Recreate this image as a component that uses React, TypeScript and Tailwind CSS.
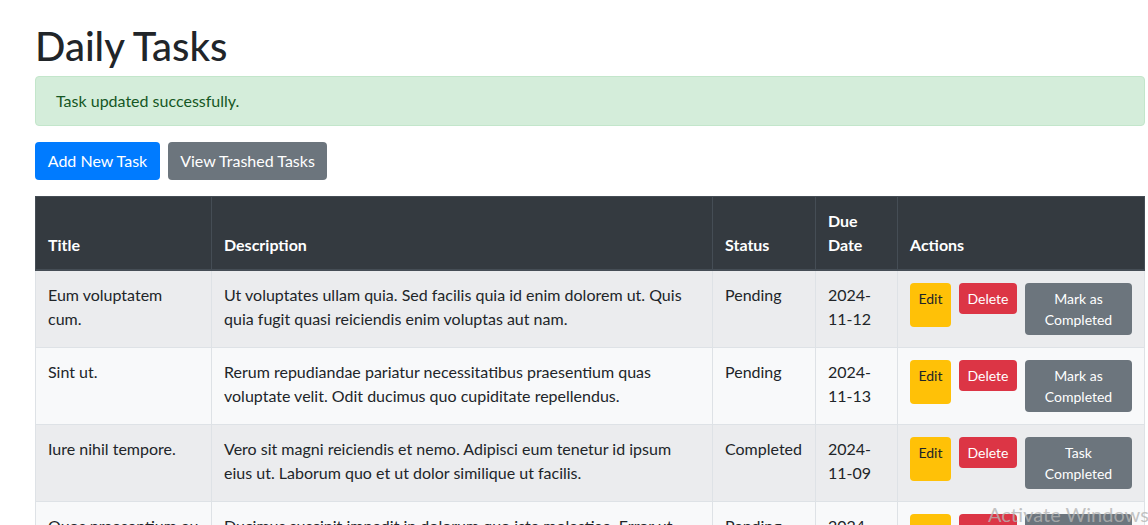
import React from "react";

type Task = {
  title: string;
  description: string;
  status: "Pending" | "Completed";
  due: string;
};

const tasks: Task[] = [
  {
    title: "Eum voluptatem cum.",
    description:
      "Ut voluptates ullam quia. Sed facilis quia id enim dolorem ut. Quis quia fugit quasi reiciendis enim voluptas aut nam.",
    status: "Pending",
    due: "2024-11-12",
  },
  {
    title: "Sint ut.",
    description:
      "Rerum repudiandae pariatur necessitatibus praesentium quas voluptate velit. Odit ducimus quo cupiditate repellendus.",
    status: "Pending",
    due: "2024-11-13",
  },
  {
    title: "Iure nihil tempore.",
    description:
      "Vero sit magni reiciendis et nemo. Adipisci eum tenetur id ipsum eius ut. Laborum quo et ut dolor similique ut facilis.",
    status: "Completed",
    due: "2024-11-09",
  },
  {
    title: "Quos praesentium eu fugiat.",
    description:
      "Ducimus suscipit impedit in dolorum quo iste molestiae. Error ut sed quia et aut.",
    status: "Pending",
    due: "2024-11-15",
  },
];

const th =
  "border border-[#454d55] border-b-2 p-3 text-left align-bottom font-bold";
const td = "border border-[#dee2e6] p-3 align-top";

const App = () => {
  return (
    <div className="relative h-[525px] overflow-hidden bg-white font-['Lato','Liberation_Sans',sans-serif] text-base leading-6 text-[#212529]">
      <div className="ml-[35px] w-[1110px] pt-[22px]">
        <h1 className="mb-[6px] text-[40px] leading-[48px] font-medium">Daily Tasks</h1>

        <div className="mb-4 rounded border border-[#c3e6cb] bg-[#d4edda] px-5 py-3 text-[#155724]">
          Task updated successfully.
        </div>

        <div className="mb-4 flex gap-2">
          <button className="h-[38px] w-[125px] rounded bg-[#007bff] text-white">Add New Task</button>
          <button className="h-[38px] w-[159px] rounded bg-[#6c757d] text-white">View Trashed Tasks</button>
        </div>

        <table className="w-full table-fixed border-collapse">
          <thead className="bg-[#343a40] text-white">
            <tr>
              <th className={`${th} w-[176px]`}>Title</th>
              <th className={`${th} w-[501px]`}>Description</th>
              <th className={`${th} w-[103px]`}>Status</th>
              <th className={`${th} w-[82px]`}>Due Date</th>
              <th className={th}>Actions</th>
            </tr>
          </thead>
          <tbody>
            {tasks.map((task, i) => (
              <tr key={i} className={i % 2 === 0 ? "bg-[#ebecee]" : "bg-[#f8f9fa]"}>
                <td className={td}>{task.title}</td>
                <td className={td}>{task.description}</td>
                <td className={td}>{task.status}</td>
                <td className={td}>{task.due}</td>
                <td className={td}>
                  <div className="flex items-start gap-2 text-sm leading-[21px]">
                    <button className="h-[44px] w-[41px] rounded bg-[#ffc107] px-2 pb-[18px] pt-[4px] text-[#212529]">
                      Edit
                    </button>
                    <button className="h-[31px] w-[58px] rounded bg-[#dc3545] px-2 text-white">
                      Delete
                    </button>
                    <button className="h-[52px] w-[107px] rounded bg-[#6c757d] px-2 text-white">
                      {task.status === "Completed" ? "Task Completed" : "Mark as Completed"}
                    </button>
                  </div>
                </td>
              </tr>
            ))}
          </tbody>
        </table>
      </div>

      <div className="pointer-events-none absolute left-[988px] top-[502px] whitespace-nowrap text-[20px] text-[#b4b4b4]/80">
        Activate Windows
      </div>
    </div>
  );
};

export default App;
